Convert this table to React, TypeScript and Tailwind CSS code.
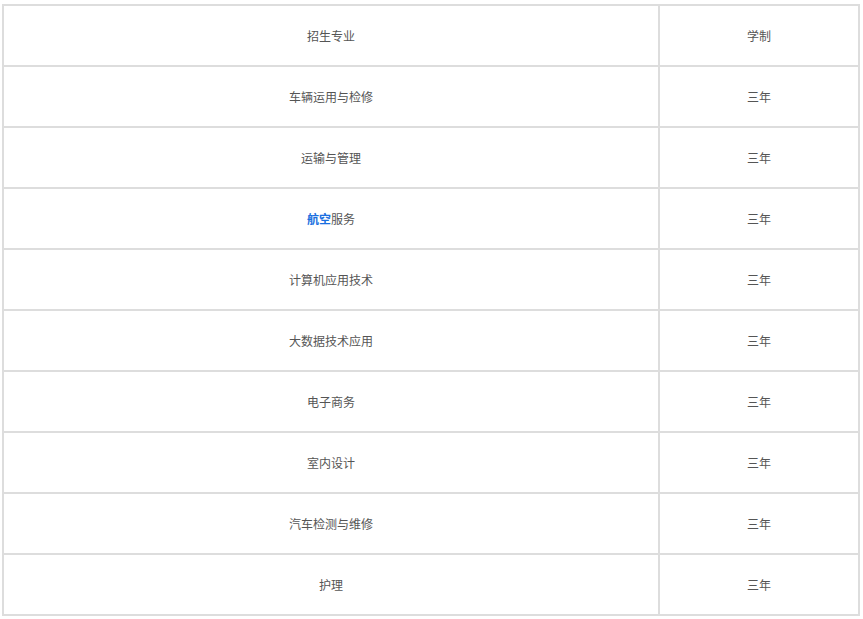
import React from "react";

const rows: { name: React.ReactNode; years: string }[] = [
  { name: "车辆运用与检修", years: "三年" },
  { name: "运输与管理", years: "三年" },
  {
    name: (
      <>
        <span className="font-semibold text-[#1a6fe0]">航空</span>服务
      </>
    ),
    years: "三年",
  },
  { name: "计算机应用技术", years: "三年" },
  { name: "大数据技术应用", years: "三年" },
  { name: "电子商务", years: "三年" },
  { name: "室内设计", years: "三年" },
  { name: "汽车检测与维修", years: "三年" },
  { name: "护理", years: "三年" },
];

const Row = ({ name, years, first }: { name: React.ReactNode; years: string; first?: boolean }) => (
  <div className={`flex ${first ? "h-[59px]" : "h-[61px] border-t-2 border-[#dddddd]"}`}>
    <div className="w-[656px] border-r-2 border-[#dddddd] flex items-center justify-center">
      {name}
    </div>
    <div className="flex-1 flex items-center justify-center">{years}</div>
  </div>
);

const App = () => (
  <div className="bg-white min-h-screen pt-[4px] pl-[2px]">
    <div
      className="w-[858px] border-2 border-[#dddddd] text-[12px] text-[#555555]"
      style={{ fontFamily: '"Noto Sans CJK SC", "Noto Sans", sans-serif' }}
    >
      <Row name="招生专业" years="学制" first />
      {rows.map((r, i) => (
        <Row key={i} name={r.name} years={r.years} />
      ))}
    </div>
  </div>
);

export default App;
